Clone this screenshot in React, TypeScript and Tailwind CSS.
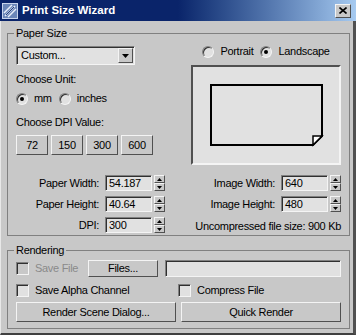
import React from 'react';

// raised / sunken bevels, win-classic style
const raised = 'border border-t-[#f4f4f4] border-l-[#f4f4f4] border-r-[#505050] border-b-[#505050] bg-[#c8c8c8]';
const sunken = 'border border-t-[#808080] border-l-[#808080] border-r-[#f4f4f4] border-b-[#f4f4f4] shadow-[inset_1px_1px_0_#303030]';

function Tri({ down }: { down?: boolean }) {
  return (
    <svg width="5" height="3" viewBox="0 0 5 3">
      <path d={down ? 'M0 0H5L2.5 3z' : 'M2.5 0L5 3H0z'} fill="#000" />
    </svg>
  );
}

function Spinner() {
  return (
    <div className="flex flex-col w-[11px] h-[16px] ml-[2px]">
      <div className={`flex-1 flex items-center justify-center ${raised}`}>
        <Tri />
      </div>
      <div className={`flex-1 flex items-center justify-center ${raised}`}>
        <Tri down />
      </div>
    </div>
  );
}

function NumField({ label, value }: { label: string; value: string }) {
  return (
    <div className="flex items-center justify-end h-[16px]">
      <span className="mr-[6px]">{label}</span>
      <div className={`w-[47px] h-[16px] bg-[#e1e1e1] pl-[3px] flex items-center ${sunken}`}>{value}</div>
      <Spinner />
    </div>
  );
}

function Radio({ label, checked }: { label: string; checked?: boolean }) {
  return (
    <div className="flex items-center">
      <div className={`w-[12px] h-[12px] rounded-full bg-[#e1e1e1] flex items-center justify-center ${sunken}`}>
        {checked && <div className="w-[4px] h-[4px] rounded-full bg-black" />}
      </div>
      <span className="ml-[6px]">{label}</span>
    </div>
  );
}

function Check({ label, disabled }: { label: string; disabled?: boolean }) {
  return (
    <div className="flex items-center">
      <div className={`w-[13px] h-[13px] ${disabled ? 'bg-[#c8c8c8]' : 'bg-[#e1e1e1]'} ${sunken}`} />
      <span className={`ml-[6px] ${disabled ? 'text-[#8a8a8a]' : ''}`}>{label}</span>
    </div>
  );
}

function Btn({ children, className = '' }: { children: React.ReactNode; className?: string }) {
  return <div className={`flex items-center justify-center ${raised} ${className}`}>{children}</div>;
}

export default function App() {
  return (
    <div className="w-[356px] h-[335px] flex flex-col bg-[#c8c8c8] text-black text-[11px] leading-[13px] tracking-[-0.3px] font-['Liberation_Sans',Arial,sans-serif] select-none">
      {/* title bar */}
      <div className="h-[21px] shrink-0 flex items-center bg-linear-to-r from-[#0a246a] via-[#0a246a] to-[#a6caf0] pl-[2px] pr-[5px]">
        <svg width="16" height="16" viewBox="0 0 16 16">
          <rect x="0.5" y="0.5" width="15" height="15" fill="#6b86b8" stroke="#c8d4ec" />
          <path d="M3 13L13 3M6 14L14 6M2 10L10 2" stroke="#e8eefa" strokeWidth="1.5" />
          <path d="M4 12L12 4" stroke="#27407a" strokeWidth="1" />
        </svg>
        <span className="ml-[4px] text-white font-bold text-[11.5px] tracking-normal">Print Size Wizard</span>
        <div className={`ml-auto w-[16px] h-[14px] flex items-center justify-center ${raised}`}>
          <svg width="8" height="7" viewBox="0 0 8 7">
            <path d="M0.5 0.5L7.5 6.5M7.5 0.5L0.5 6.5" stroke="#000" strokeWidth="1.6" />
          </svg>
        </div>
      </div>

      {/* client area */}
      <div className="flex-1 flex flex-col pl-[6px] pr-[3px] pt-[6px] border-l border-l-[#e8e8e8] border-r-[3px] border-r-[#505050] border-b-2 border-b-[#404040]">
        <fieldset className="border border-[#808080]">
          <legend className="ml-[6px] px-[2px]">Paper Size</legend>
          <div className="px-[8px] pb-[2px]">
            <div className="flex justify-between">
              <div className="flex flex-col">
                <div className={`mt-[6px] w-[119px] h-[19px] bg-[#e1e1e1] flex items-center pl-[4px] pr-[1px] ${sunken}`}>
                  <span>Custom...</span>
                  <div className={`ml-auto w-[15px] h-[15px] flex items-center justify-center ${raised}`}>
                    <svg width="7" height="4" viewBox="0 0 7 4">
                      <path d="M0 0H7L3.5 4z" fill="#000" />
                    </svg>
                  </div>
                </div>
                <div className="mt-[8px]">Choose Unit:</div>
                <div className="mt-[6px] flex items-center gap-[7px]">
                  <Radio label="mm" checked />
                  <Radio label="inches" />
                </div>
                <div className="mt-[11px]">Choose DPI Value:</div>
                <div className="mt-[6px] flex gap-[3px]">
                  {['72', '150', '300', '600'].map((d) => (
                    <Btn key={d} className="w-[32px] h-[20px]">
                      {d}
                    </Btn>
                  ))}
                </div>
              </div>
              <div className="flex flex-col w-[150px]">
                <div className="mt-[5px] flex items-center justify-center gap-[7px]">
                  <Radio label="Portrait" />
                  <Radio label="Landscape" checked />
                </div>
                <div className="mt-[7px] h-[100px] bg-[#e1e1e1] border-2 border-t-[#505050] border-l-[#505050] border-r-[#f4f4f4] border-b-[#f4f4f4]">
                  <svg width="146" height="96" viewBox="0 0 146 96">
                    <path d="M18 18H129V69L120 78H18Z" fill="none" stroke="#000" strokeWidth="2" />
                    <path d="M120 78V69H129Z" fill="#fff" stroke="#000" strokeWidth="1.5" />
                  </svg>
                </div>
              </div>
            </div>

            <div className="mt-[10px] flex flex-col gap-[5px]">
              <div className="flex justify-between">
                <div className="w-[149px]">
                  <NumField label="Paper Width:" value="54.187" />
                </div>
                <NumField label="Image Width:" value="640" />
              </div>
              <div className="flex justify-between">
                <div className="w-[149px]">
                  <NumField label="Paper Height:" value="40.64" />
                </div>
                <NumField label="Image Height:" value="480" />
              </div>
              <div className="flex justify-between">
                <div className="w-[149px]">
                  <NumField label="DPI:" value="300" />
                </div>
                <div className="pt-[3px]">Uncompressed file size: 900 Kb</div>
              </div>
            </div>
          </div>
        </fieldset>

        <fieldset className="mt-[8px] border border-[#808080]">
          <legend className="ml-[6px] px-[2px]">Rendering</legend>
          <div className="px-[8px] pb-[6px]">
            <div className="mt-[3px] flex items-center h-[17px]">
              <div className="w-[72px]">
                <Check label="Save File" disabled />
              </div>
              <Btn className="w-[70px] h-[17px]">Files...</Btn>
              <div className={`ml-[7px] flex-1 h-[17px] bg-[#e1e1e1] ${sunken}`} />
            </div>
            <div className="mt-[7px] flex items-center h-[13px]">
              <div className="w-[162px]">
                <Check label="Save Alpha Channel" />
              </div>
              <Check label="Compress File" />
            </div>
            <div className="mt-[5px] flex gap-[5px]">
              <Btn className="w-[160px] h-[20px]">Render Scene Dialog...</Btn>
              <Btn className="flex-1 h-[20px]">Quick Render</Btn>
            </div>
          </div>
        </fieldset>
      </div>
    </div>
  );
}
